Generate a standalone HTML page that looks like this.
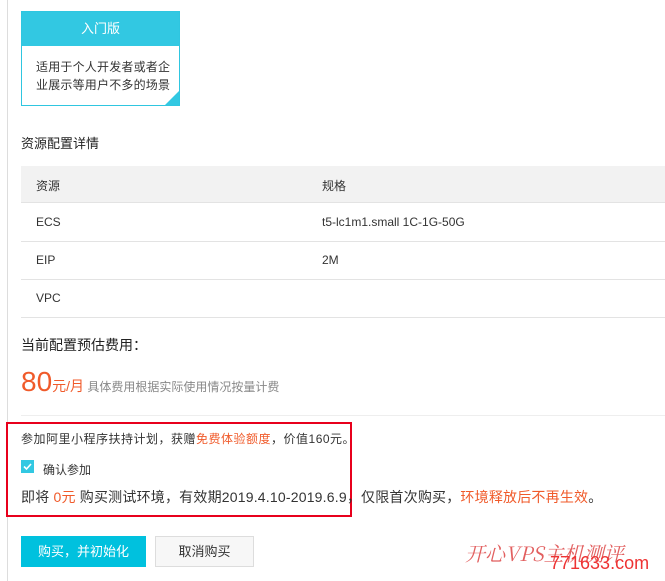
<!DOCTYPE html>
<html><head><meta charset="utf-8"><style>
*{margin:0;padding:0;box-sizing:border-box}
body{width:665px;height:581px;background:#fff;position:relative;overflow:hidden;font-family:"Liberation Sans","Noto Sans CJK SC",sans-serif;color:#333;font-size:12px}
.a{position:absolute;white-space:nowrap}
</style></head><body>
<div class="a" style="left:7px;top:0;width:1px;height:581px;background:#ddd"></div>
<div class="a" style="left:21px;top:11px;width:159px;height:95px;border:1px solid #2fc6e0;">
 <div style="height:34px;background:#32c8e2;color:#fff;font-size:13px;text-align:center;line-height:34px">入门版</div>
 <div style="padding:12px 0 0 14px;line-height:18px;font-size:12px;letter-spacing:0.2px;color:#333">适用于个人开发者或者企<br>业展示等用户不多的场景</div>
 <div class="a" style="right:0;bottom:0;width:0;height:0;border-left:14px solid transparent;border-bottom:14px solid #32c8e2"></div>
</div>
<div class="a" style="left:21px;top:133px;font-size:13px;color:#222">资源配置详情</div>
<div class="a" style="left:21px;top:166px;width:644px;height:37px;background:#f2f2f2;border-bottom:1px solid #e3e3e3"></div>
<div class="a" style="left:36px;top:177px">资源</div><div class="a" style="left:322px;top:177px">规格</div>
<div class="a" style="left:21px;top:241px;width:644px;height:1px;background:#e3e3e3"></div>
<div class="a" style="left:21px;top:279px;width:644px;height:1px;background:#e3e3e3"></div>
<div class="a" style="left:21px;top:317px;width:644px;height:1px;background:#e3e3e3"></div>
<div class="a" style="left:36px;top:215px">ECS</div><div class="a" style="left:322px;top:215px">t5-lc1m1.small 1C-1G-50G</div>
<div class="a" style="left:36px;top:253px">EIP</div><div class="a" style="left:322px;top:253px">2M</div>
<div class="a" style="left:36px;top:291px">VPC</div>
<div class="a" style="left:21px;top:335px;font-size:14px;color:#222">当前配置预估费用：</div>
<div class="a" style="left:21px;top:366px;color:#f05a2a"><span style="font-size:28px">80</span><span style="font-size:14px">元/月</span> <span style="font-size:12px;color:#888">具体费用根据实际使用情况按量计费</span></div>
<div class="a" style="left:21px;top:415px;width:644px;height:1px;background:#eee"></div>
<div class="a" style="left:6px;top:422px;width:346px;height:95px;border:2px solid #e8001c"></div>
<div class="a" style="left:21px;top:430px;font-size:12px;letter-spacing:0.5px">参加阿里小程序扶持计划，获赠<span style="color:#f05a2a">免费体验额度</span>，价值160元。</div>
<div class="a" style="left:21px;top:460px;width:13px;height:13px;background:#32c8e2"><svg width="13" height="13"><path d="M3 6.5l2.5 2.5 4.5-5" stroke="#fff" stroke-width="1.6" fill="none"/></svg></div>
<div class="a" style="left:43px;top:461px;font-size:12px">确认参加</div>
<div class="a" style="left:21px;top:487px;font-size:14px;letter-spacing:0.2px">即将 <span style="color:#f05a2a">0元</span> 购买测试环境，有效期2019.4.10-2019.6.9，仅限首次购买，<span style="color:#f05a2a">环境释放后不再生效</span>。</div>
<div class="a" style="left:21px;top:536px;width:125px;height:31px;background:#00c1de;color:#fff;font-size:13px;text-align:center;line-height:31px">购买，并初始化</div>
<div class="a" style="left:155px;top:536px;width:99px;height:31px;background:#f7f7f7;border:1px solid #ddd;font-size:13px;text-align:center;line-height:29px">取消购买</div>
<div class="a" style="left:465px;top:538px;font-size:20px;color:#d44;font-style:italic;font-family:'Noto Serif CJK SC',serif;opacity:.85">开心VPS主机测评</div>
<div class="a" style="left:550px;top:553px;font-size:18px;color:#e33">771633.com</div>
</body></html>
